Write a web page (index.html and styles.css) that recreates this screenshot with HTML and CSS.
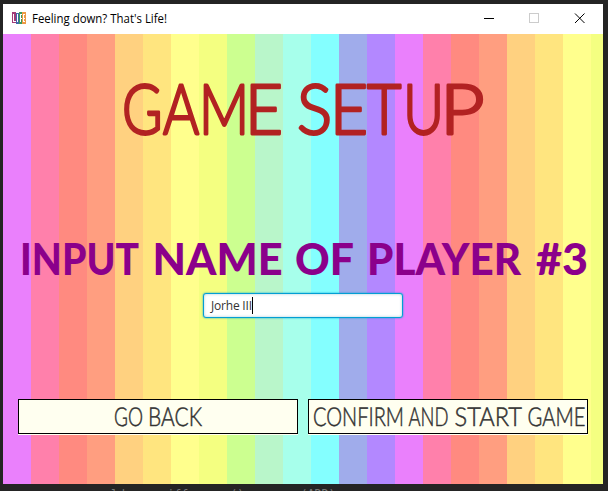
FILE: index.html
```
<!DOCTYPE html>
<html lang="en">
<head>
<meta charset="utf-8">
<title>Feeling down? That's Life!</title>
<link rel="stylesheet" href="styles.css">
</head>
<body>
<div class="window">
  <header class="titlebar">
    <svg class="logo" width="14" height="12" viewBox="0 0 14 12" shape-rendering="crispEdges">
      <rect width="4" height="11" fill="#a33a78"/><rect x="4" y="1" width="3" height="11" fill="#4268a8"/><rect x="7" width="3" height="12" fill="#3c9a5c"/><rect x="10" width="4" height="12" fill="#ee9a45"/>
      <path d="M1.500 2v7.500H4M5.500 2v8M8.500 10V2.500h1.500M8.500 6.500h1.500M13 2.500h-1.500v7H13M11.500 6.500H13" stroke="#fff" fill="none"/>
    </svg>
    <span class="caption"><svg width="140" height="20"><text x="0" y="14" textLength="135" lengthAdjust="spacingAndGlyphs">Feeling down? That's Life!</text></svg></span>
    <svg class="controls" width="102" height="12" viewBox="0 0 102 12" shape-rendering="crispEdges">
      <path d="M0 6.500h10" stroke="#000"/>
      <rect x="45.500" y="1.500" width="9" height="9" fill="none" stroke="#ccc"/>
      <path d="M91 1.500l9.500 9.500M100.500 1.500L91 11" stroke="#000" shape-rendering="auto"/>
    </svg>
  </header>
  <main class="stage">
    <svg class="heading" width="600" height="80">
      <text transform="translate(119 63.500) scale(.8 1)">G</text>
      <text transform="translate(160 63.500) scale(.8 1)">A</text>
      <text transform="translate(196 63.500) scale(.8 1)">M</text>
      <text transform="translate(242 63.500) scale(.95 1)">E</text>
      <text transform="translate(294 63.500) scale(.95 1)">S</text>
      <text transform="translate(327 63.500) scale(.95 1)">E</text>
      <text transform="translate(364 63.500) scale(.86 1)">T</text>
      <text transform="translate(400 63.500) scale(.82 1)">U</text>
      <text transform="translate(437 63.500) scale(1.120 1)">P</text>
    </svg>
    <svg class="prompt" width="600" height="60">
      <text x="17" y="40" textLength="119" lengthAdjust="spacingAndGlyphs">INPUT</text>
      <text x="149.500" y="40" textLength="130" lengthAdjust="spacingAndGlyphs">NAME</text>
      <text x="292" y="40" textLength="59" lengthAdjust="spacingAndGlyphs">OF</text>
      <text x="364" y="40" textLength="154" lengthAdjust="spacingAndGlyphs">PLAYER</text>
      <text x="533" y="40" textLength="52" lengthAdjust="spacingAndGlyphs">#3</text>
    </svg>
    <div class="field"><span>Jorhe III</span><i class="caret"></i></div>
    <div class="actions">
      <button class="action"><svg width="278" height="33">
        <text x="95" y="26" textLength="29" lengthAdjust="spacingAndGlyphs">GO</text>
        <text x="129" y="26" textLength="54" lengthAdjust="spacingAndGlyphs">BACK</text>
      </svg></button>
      <button class="action"><svg width="278" height="33">
        <text x="4" y="26" textLength="91" lengthAdjust="spacingAndGlyphs">CONFIRM</text>
        <text x="99.500" y="26" textLength="40" lengthAdjust="spacingAndGlyphs">AND</text>
        <text x="145.500" y="26" textLength="67.500" lengthAdjust="spacingAndGlyphs">START</text>
        <text x="218.500" y="26" textLength="58" lengthAdjust="spacingAndGlyphs">GAME</text>
      </svg></button>
    </div>
  </main>
</div>
<pre class="editor">ld      iff      ()        (ADD)</pre>
</body>
</html>
```
FILE: styles.css
```
* { box-sizing: border-box; }
body { margin: 0; width: 608px; height: 491px; overflow: hidden; background: #242424; padding: 4px 5px 0 3px; }
svg { display: block; overflow: visible; }
.window { width: 600px; height: 480px; background: #fff; }
.titlebar { height: 30px; display: flex; align-items: center; padding: 0 17px 0 9px; }
.logo { margin-top: -2px; }
.caption { margin-left: 6px; font: 12px "Open Sans", sans-serif; }
.controls { margin: -2px 0 0 auto; }
.stage {
  height: 450px; display: flex; flex-direction: column; align-items: center;
  background: repeating-linear-gradient(90deg, #ea80fc 0 28px, #ff80ab 28px 56px, #ff8a80 56px 84px, #ff9e80 84px 112px, #ffd180 112px 140px, #ffe57f 140px 168px, #ffff8d 168px 196px, #f4ff81 196px 224px, #ccff90 224px 252px, #b9f6ca 252px 280px, #a7ffeb 280px 308px, #84ffff 308px 336px, #a0aceb 336px 364px, #b388ff 364px 392px);
}
.heading { margin-top: 36px; font: 300 69px Lato, sans-serif; fill: #b22222; stroke: #b22222; stroke-width: 2.800px; stroke-linejoin: round; }
.prompt { margin-top: 85px; font: 900 44.500px Lato, sans-serif; fill: #8b008b; }
.field {
  margin-top: -2px; width: 200px; height: 25px; padding-left: 7px; display: flex; align-items: center;
  border: 1px solid #039ed3; border-radius: 3px; background: #fff; color: #333;
  box-shadow: 0 0 2px #039ed3, inset 0 0 3px #a8cbd6; font: 12px "Open Sans", sans-serif; letter-spacing: -.2px;
}
.caret { width: 1px; height: 17px; background: #000; }
.actions { margin-top: 81px; display: flex; gap: 10px; }
.action { width: 280px; height: 35px; padding: 0; border: 1px solid #000; border-radius: 0; background: #fffff0; box-shadow: 0 1px #fffff0; font: 300 26px Lato, sans-serif; fill: #333; stroke: #333; stroke-width: .5px; text-rendering: geometricPrecision; }
.editor { margin: 3px 0 0 108px; font: 11.670px/14px "DejaVu Sans Mono", monospace; color: #777; }
```
